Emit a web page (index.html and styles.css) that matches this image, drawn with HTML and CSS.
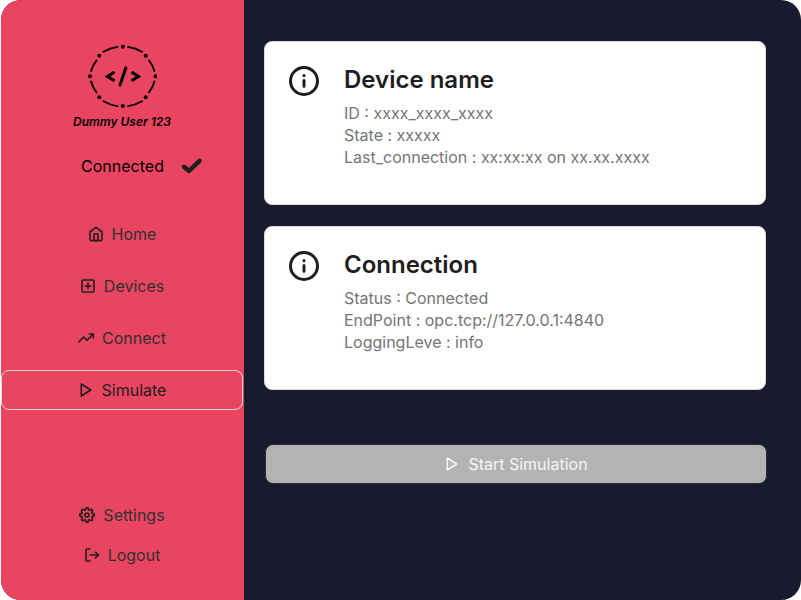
FILE: index.html
```html
<!DOCTYPE html>
<html lang="en">
<head>
<meta charset="utf-8">
<title>Device simulation</title>
<link rel="stylesheet" href="styles.css">
</head>
<body>
<div class="app">
  <aside class="sidebar">
    <div class="profile">
      <svg class="logo" viewBox="0 0 70 64" fill="none" stroke="#000" stroke-linecap="round">
        <path stroke-width="1.900" d="M16.500 7.800Q23 4 30.500 2.900M41 2.900Q48.500 4 55 7.800M62 16.500Q66 21.500 67.400 27M67.400 37.500Q66 43 62 48.500M55 57.200Q48.500 61 41 62.100M30.500 62.100Q23 61 16.500 57.200M9.500 48.500Q5.500 43 4.100 37.500M4.100 27Q5.500 21.500 9.500 16.500"/>
        <g fill="#000" stroke="none">
          <circle cx="35.800" cy="2.800" r="2"/><circle cx="58.700" cy="11.800" r="2"/><circle cx="68.500" cy="32.300" r="2"/><circle cx="58.700" cy="53.300" r="2"/>
          <circle cx="35.800" cy="62" r="2"/><circle cx="12.300" cy="53.300" r="2"/><circle cx="3" cy="32.300" r="2"/><circle cx="12.300" cy="11.800" r="2"/>
        </g>
        <path stroke-width="3" stroke-linecap="butt" d="M27.500 28L20.500 32.400L27.500 36.800M44.500 28L51.500 32.400L44.500 36.800"/>
        <path stroke-width="3" d="M38.800 24L33 41"/>
      </svg>
      <p class="user">Dummy User 123</p>
      <p class="status">Connected
        <svg class="check" viewBox="0 0 22 18" fill="none" stroke="#1e1e1e" stroke-width="4.400" stroke-linecap="round" stroke-linejoin="round"><path d="M3 9.800L8 14L18.500 3.800"/></svg>
      </p>
    </div>
    <nav class="menu">
      <a class="item" href="#home"><svg class="icon" viewBox="0 0 16 16"><path d="M2 6L8 1.300L14 6V13.300A1.300 1.300 0 0 1 12.700 14.600H3.300A1.300 1.300 0 0 1 2 13.300ZM6 14.600V8H10V14.600"/></svg>Home</a>
      <a class="item" href="#devices"><svg class="icon" viewBox="0 0 16 16"><rect x="2" y="2" width="12" height="12" rx="1.300"/><path d="M8 5.300V10.700M5.300 8H10.700"/></svg>Devices</a>
      <a class="item" href="#connect"><svg class="icon" viewBox="0 0 16 16"><path d="M15.300 4L9 10.300L5.700 7L.7 12M11.300 4H15.300V8"/></svg>Connect</a>
      <a class="item active" href="#simulate" aria-current="page"><svg class="icon" viewBox="0 0 16 16"><path d="M3.300 2L12.700 8L3.300 14Z"/></svg>Simulate</a>
    </nav>
    <nav class="account">
      <a class="item" href="#settings"><svg class="icon gear" viewBox="0 0 24 24"><circle cx="12" cy="12" r="3"/><path d="M19.400 15a1.650 1.650 0 0 0 .33 1.820l.06.06a2 2 0 1 1-2.830 2.830l-.06-.06a1.650 1.650 0 0 0-2.820 1.170V21a2 2 0 0 1-4 0v-.09a1.650 1.650 0 0 0-2.900-1.180l-.06.06a2 2 0 1 1-2.830-2.830l.06-.06A1.650 1.650 0 0 0 3.090 14H3a2 2 0 0 1 0-4h.09a1.650 1.650 0 0 0 1.180-2.900l-.06-.06a2 2 0 1 1 2.830-2.830l.06.06A1.650 1.650 0 0 0 10 3.090V3a2 2 0 0 1 4 0v.09a1.650 1.650 0 0 0 2.820 1.180l.06-.06a2 2 0 1 1 2.830 2.830l-.06.06A1.650 1.650 0 0 0 20.910 10H21a2 2 0 0 1 0 4h-.09a1.650 1.650 0 0 0-1.510 1z"/></svg>Settings</a>
      <a class="item" href="#logout"><svg class="icon" viewBox="0 0 16 16"><path d="M6 2H3.300A1.300 1.300 0 0 0 2 3.300V12.700A1.300 1.300 0 0 0 3.300 14H6M11.300 11L14.600 8L11.300 5M14.600 8H6"/></svg>Logout</a>
    </nav>
  </aside>
  <main class="content">
    <section class="card">
      <svg class="info" viewBox="0 0 32 32"><circle cx="16" cy="16" r="13.500"/><path d="M16 15.500V21.300M16 10.600V10.700"/></svg>
      <div>
        <h2>Device name</h2>
        <p>ID : xxxx_xxxx_xxxx</p>
        <p>State : xxxxx</p>
        <p>Last_connection : xx:xx:xx on xx.xx.xxxx</p>
      </div>
    </section>
    <section class="card">
      <svg class="info" viewBox="0 0 32 32"><circle cx="16" cy="16" r="13.500"/><path d="M16 15.500V21.300M16 10.600V10.700"/></svg>
      <div>
        <h2>Connection</h2>
        <p>Status : Connected</p>
        <p>EndPoint : opc.tcp://127.0.0.1:4840</p>
        <p>LoggingLeve : info</p>
      </div>
    </section>
    <button class="start" type="button"><svg class="icon" viewBox="0 0 16 16"><path d="M3.300 2L12.700 8L3.300 14Z"/></svg>Start Simulation</button>
  </main>
</div>
</body>
</html>
```
FILE: styles.css
```css
* {
  box-sizing: border-box;
}

body {
  margin: 0;
  background: #fff;
  font-family: Inter, "Liberation Sans", sans-serif;
  font-size: 16px;
  line-height: 22px;
}

h2,
p {
  margin: 0;
}

.app {
  display: grid;
  grid-template-columns: 243px 1fr;
  min-height: 100vh;
  margin-left: 1px;
  border-radius: 20px;
  overflow: hidden;
  background: #1a1a2e;
}

.sidebar {
  display: flex;
  flex-direction: column;
  padding: 44px 1px 25px 0;
  background: #e94560;
}

.profile {
  display: flex;
  flex-direction: column;
  align-items: center;
  color: #000;
}

.logo {
  width: 70px;
  height: 64px;
}

.user {
  margin-top: 6px;
  font-size: 12px;
  line-height: 16px;
  font-weight: 600;
  font-style: italic;
}

.status {
  display: flex;
  align-items: center;
  gap: 17px;
  margin-top: 25px;
  padding-left: 40px;
}

.check {
  width: 22px;
  height: 18px;
}

.menu {
  display: flex;
  flex-direction: column;
  gap: 12px;
  margin-top: 37px;
}

.account {
  margin-top: auto;
}

.item {
  display: flex;
  align-items: center;
  justify-content: center;
  gap: 8px;
  height: 40px;
  border: 1px solid transparent;
  border-radius: 8px;
  color: #303030;
  text-decoration: none;
}

.active {
  border-color: #d9d9d9;
  color: #1e1e1e;
}

.icon {
  width: 16px;
  height: 16px;
  fill: none;
  stroke: #1e1e1e;
  stroke-width: 1.6;
  stroke-linecap: round;
  stroke-linejoin: round;
}

.gear {
  stroke-width: 2.4;
}

.content {
  display: flex;
  flex-direction: column;
  gap: 21px;
  padding: 41px 35px 20px 20px;
}

.card {
  display: flex;
  align-items: flex-start;
  gap: 24px;
  min-height: 164px;
  padding: 23px;
  border: 1px solid #d9d9d9;
  border-radius: 8px;
  background: #fff;
  color: #757575;
}

.card h2 {
  margin-bottom: 8px;
  color: #1e1e1e;
  font-size: 24px;
  line-height: 29px;
  font-weight: 600;
}

.info {
  flex: none;
  width: 32px;
  height: 32px;
  fill: none;
  stroke: #1e1e1e;
  stroke-width: 3;
  stroke-linecap: round;
}

.start {
  display: flex;
  align-items: center;
  justify-content: center;
  gap: 8px;
  height: 40px;
  margin: 33px -1px 0 1px;
  border: 1px solid #2c2c2c;
  border-radius: 8px;
  background: #b3b3b3;
  color: #f5f5f5;
  font: inherit;
}

.start .icon {
  stroke: #f5f5f5;
}
```
